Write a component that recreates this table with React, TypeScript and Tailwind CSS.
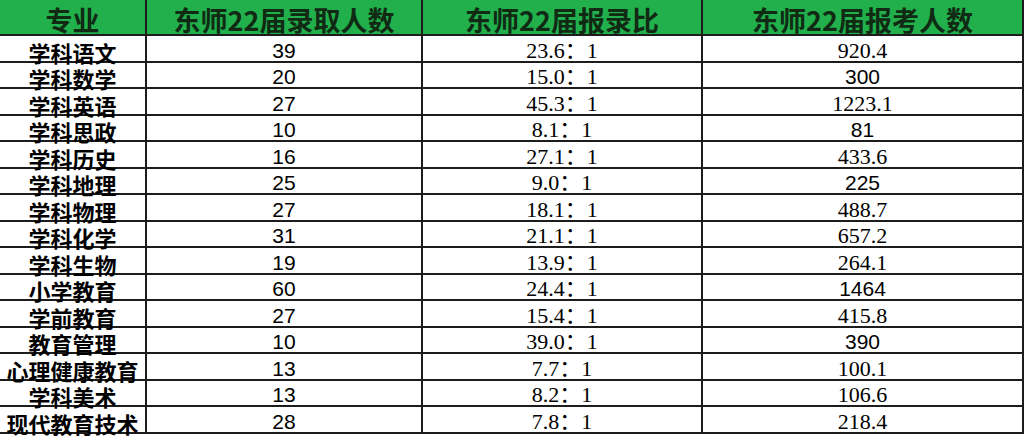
import React from 'react';

const rows: [string, string, string, string][] = [
  ['学科语文', '39', '23.6：1', '920.4'],
  ['学科数学', '20', '15.0：1', '300'],
  ['学科英语', '27', '45.3：1', '1223.1'],
  ['学科思政', '10', '8.1：1', '81'],
  ['学科历史', '16', '27.1：1', '433.6'],
  ['学科地理', '25', '9.0：1', '225'],
  ['学科物理', '27', '18.1：1', '488.7'],
  ['学科化学', '31', '21.1：1', '657.2'],
  ['学科生物', '19', '13.9：1', '264.1'],
  ['小学教育', '60', '24.4：1', '1464'],
  ['学前教育', '27', '15.4：1', '415.8'],
  ['教育管理', '10', '39.0：1', '390'],
  ['心理健康教育', '13', '7.7：1', '100.1'],
  ['学科美术', '13', '8.2：1', '106.6'],
  ['现代教育技术', '28', '7.8：1', '218.4'],
];

const cjk = "font-['Noto_Sans_CJK_SC',sans-serif]";
const serif = "font-['Liberation_Serif','Noto_Sans_CJK_SC',serif]";
const sans = "font-['Liberation_Sans','Noto_Sans_CJK_SC',sans-serif]";

const cell = 'flex items-end justify-center border-r-2 border-b-2 border-[#1c1c1c] whitespace-nowrap';
const head = `${cell} ${cjk} h-[36px] bg-[#21b04c] text-[#102a14] text-[27px] font-bold leading-[27px]`;
const body = `${cell} h-[26.53px] text-black leading-[22px]`;

export default function App() {
  return (
    <div className="w-[1026px] h-[436px] bg-white overflow-hidden">
      <div className="grid grid-cols-[147px_276px_280px_321px] w-[1024px]">
        {/* 表头 */}
        <div className={head}><span className="pb-[1px]">专业</span></div>
        <div className={head}><span className="pb-[1px]">东师22届录取人数</span></div>
        <div className={head}><span className="pb-[1px]">东师22届报录比</span></div>
        <div className={head}><span className="pb-[1px]">东师22届报考人数</span></div>

        {rows.map((r, i) => (
          <React.Fragment key={i}>
            <div className={`${body} ${cjk} text-[22px] font-bold`}>
              <span className="translate-y-[2px]">{r[0]}</span>
            </div>
            <div className={`${body} ${sans} text-[21px]`}>
              <span className="translate-y-[1px]">{r[1]}</span>
            </div>
            <div className={`${body} ${serif} text-[22px]`}>
              <span className="translate-y-[1px]">{r[2]}</span>
            </div>
            <div className={`${body} ${r[3].includes('.') ? serif : sans} ${r[3].includes('.') ? 'text-[22px]' : 'text-[21px]'}`}>
              <span className="translate-y-[1px]">{r[3]}</span>
            </div>
          </React.Fragment>
        ))}
      </div>
    </div>
  );
}
